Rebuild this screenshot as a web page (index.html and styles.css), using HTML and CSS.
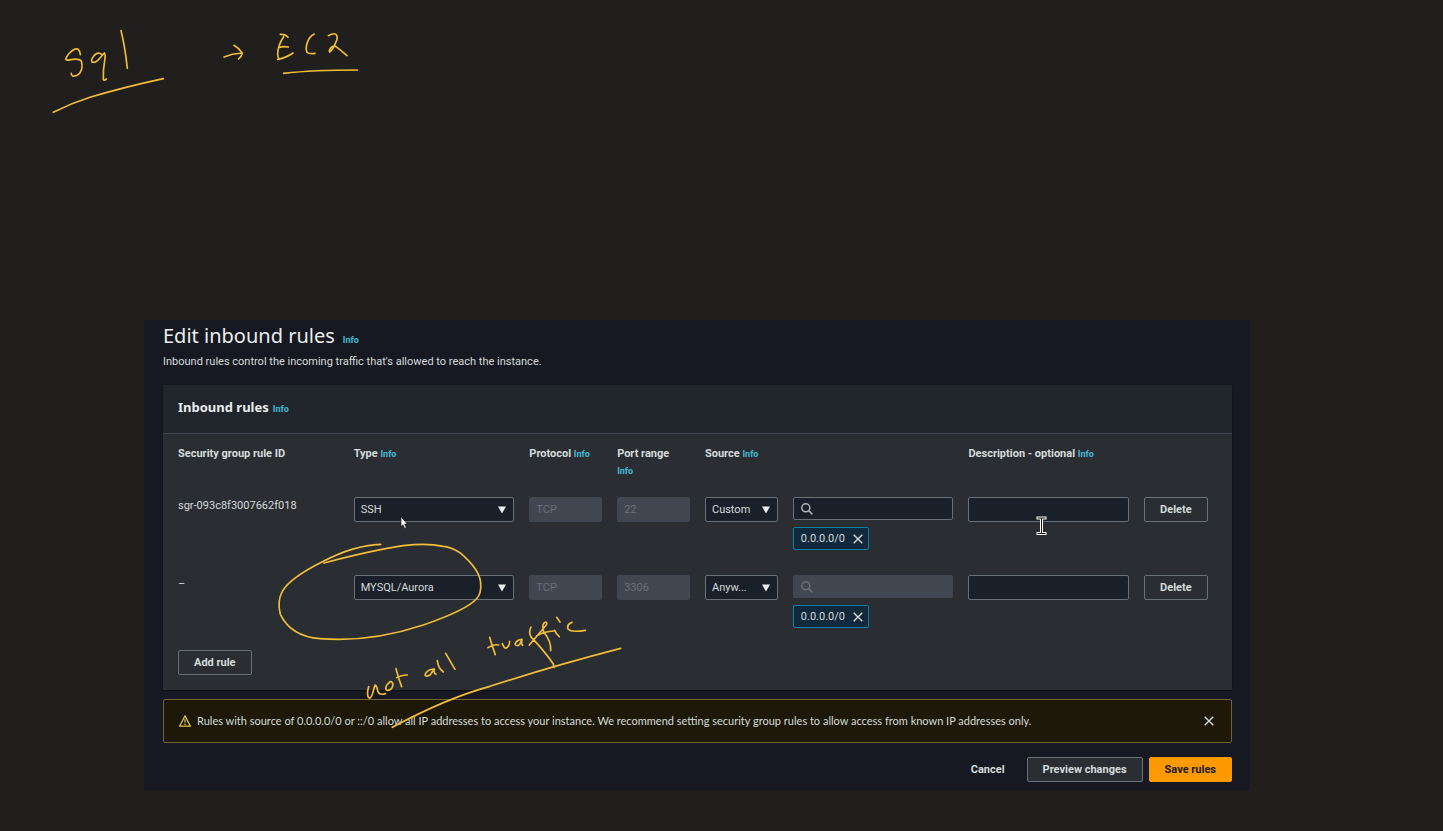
FILE: index.html
```html
<!DOCTYPE html>
<html lang="en">
<head>
<meta charset="utf-8">
<meta name="viewport" content="width=device-width, initial-scale=1">
<title>Edit inbound rules</title>
<link rel="stylesheet" href="styles.css">
</head>
<body>
<div class="board">
  <main class="console">
    <header class="page-head">
      <div class="title-row">
        <h1>Edit inbound rules</h1>
        <a class="info" href="#">Info</a>
      </div>
      <p>Inbound rules control the incoming traffic that's allowed to reach the instance.</p>
    </header>

    <section class="panel">
      <div class="panel-head">
        <h2>Inbound rules</h2>
        <a class="info" href="#">Info</a>
      </div>
      <div class="panel-body">
        <table class="rules">
          <colgroup>
            <col class="two"><col class="two"><col class="one"><col class="one"><col class="one"><col class="two"><col class="two"><col class="one">
          </colgroup>
          <thead>
            <tr>
              <th scope="col">Security group rule ID</th>
              <th scope="col">Type <a class="info" href="#">Info</a></th>
              <th scope="col">Protocol <a class="info" href="#">Info</a></th>
              <th scope="col">Port range<br><a class="info" href="#">Info</a></th>
              <th scope="col" colspan="2">Source <a class="info" href="#">Info</a></th>
              <th scope="col">Description - optional <a class="info" href="#">Info</a></th>
              <td></td>
            </tr>
          </thead>
          <tbody>
            <tr>
              <td><span class="rule-id">sgr-093c8f3007662f018</span></td>
              <td>
                <div class="select"><select class="field" aria-label="Type"><option>SSH</option></select><svg class="caret" viewBox="0 0 8 8"><path d="M0 0.5h8L4 7.5z"/></svg></div>
              </td>
              <td><input class="field" aria-label="Protocol" value="TCP" disabled></td>
              <td><input class="field" aria-label="Port range" value="22" disabled></td>
              <td>
                <div class="select"><select class="field" aria-label="Source type"><option>Custom</option></select><svg class="caret" viewBox="0 0 8 8"><path d="M0 0.5h8L4 7.5z"/></svg></div>
              </td>
              <td>
                <div class="search"><input class="field" type="search" aria-label="Source"><svg class="lens" viewBox="0 0 12 12"><circle cx="4.8" cy="4.8" r="4"/><path d="M7.8 7.8L11.4 11.4"/></svg></div>
                <span class="token">0.0.0.0/0<button class="close" type="button" aria-label="Remove 0.0.0.0/0"><svg viewBox="0 0 10 10"><path d="M.7.7l8.6 8.6M9.3.7L.7 9.3"/></svg></button></span>
              </td>
              <td><input class="field" aria-label="Description"></td>
              <td><button class="btn btn-row" type="button">Delete</button></td>
            </tr>
            <tr>
              <td><span class="rule-id">–</span></td>
              <td>
                <div class="select"><select class="field" aria-label="Type"><option>MYSQL/Aurora</option></select><svg class="caret" viewBox="0 0 8 8"><path d="M0 0.5h8L4 7.5z"/></svg></div>
              </td>
              <td><input class="field" aria-label="Protocol" value="TCP" disabled></td>
              <td><input class="field" aria-label="Port range" value="3306" disabled></td>
              <td>
                <div class="select"><select class="field" aria-label="Source type"><option>Anyw...</option></select><svg class="caret" viewBox="0 0 8 8"><path d="M0 0.5h8L4 7.5z"/></svg></div>
              </td>
              <td>
                <div class="search off"><input class="field" type="search" aria-label="Source" disabled><svg class="lens" viewBox="0 0 12 12"><circle cx="4.8" cy="4.8" r="4"/><path d="M7.8 7.8L11.4 11.4"/></svg></div>
                <span class="token">0.0.0.0/0<button class="close" type="button" aria-label="Remove 0.0.0.0/0"><svg viewBox="0 0 10 10"><path d="M.7.7l8.6 8.6M9.3.7L.7 9.3"/></svg></button></span>
              </td>
              <td><input class="field" aria-label="Description"></td>
              <td><button class="btn btn-row" type="button">Delete</button></td>
            </tr>
          </tbody>
        </table>
        <button class="btn" type="button">Add rule</button>
      </div>
    </section>

    <div class="alert" role="alert">
      <svg class="warn" viewBox="0 0 12 12"><path d="M6 .9L11.4 11.2H.6z"/><path d="M6 4.2v3.4M6 8.6v1.3"/></svg>
      <p>Rules with source of 0.0.0.0/0 or ::/0 allow all IP addresses to access your instance. We recommend setting security group rules to allow access from known IP addresses only.</p>
      <button class="close" type="button" aria-label="Dismiss"><svg viewBox="0 0 10 10"><path d="M.7.7l8.6 8.6M9.3.7L.7 9.3"/></svg></button>
    </div>

    <footer class="actions">
      <button class="btn btn-link" type="button">Cancel</button>
      <button class="btn btn-fill" type="button">Preview changes</button>
      <button class="btn btn-primary" type="button">Save rules</button>
    </footer>
  </main>

  <svg class="ink" width="1443" height="831" viewBox="0 0 1443 831" role="img" aria-label="Pen notes: Sql to EC2, not all traffic">
    <g transform="translate(40 20) scale(.3333)">
      <path d="M121 104Q119 84 105 87Q86 96 77 117Q78 123 98 118Q118 116 124 123Q130 145 119 160Q108 171 98 168Q93 166 94 160"/>
      <path d="M186 104Q174 94 163 106Q152 119 156 126Q166 131 180 114L193 99Q197 103 194 122Q189 150 190 178Q192 183 199 177"/>
      <path d="M243 32Q255 79 262 145M40 277Q93 250 150 232Q250 202 370 176"/>
      <path d="M552 111Q576 101 606 99M582 76Q596 84 607 99Q605 109 596 117"/>
      <path d="M721 43Q737 42 744 52M731 50Q714 75 713 102Q713 112 718 118M717 82Q730 78 745 81M713 118Q740 113 759 99"/>
      <path d="M823 42Q808 49 802 68Q796 84 801 97Q810 103 825 100"/>
      <path d="M865 47Q881 38 888 43Q896 53 887 68Q880 87 869 96L868 92Q874 76 887 79Q905 92 921 107M731 160Q820 150 952 150"/>
    </g>
    <g transform="translate(260 530) scale(.3333)">
      <path d="M362 43Q280 46 190 94Q90 144 67 184Q51 213 61 253Q93 319 180 326Q330 338 490 285Q620 240 649 207Q665 190 662 160Q661 120 600 68Q570 50 550 49Q500 38 430 47Q340 60 192 99"/>
    </g>
    <g transform="translate(350 600) scale(.3333)">
      <path d="M56 260Q50 280 55 292Q61 299 67 283L75 255Q81 258 83 273Q88 287 106 281"/>
      <path d="M118 248Q105 257 108 269Q115 275 125 265Q133 252 124 245Q118 244 117 249"/>
      <path d="M138 206Q145 235 155 260M140 233Q155 224 172 225"/>
      <path d="M250 207Q229 210 225 225Q227 232 240 225L253 207Q250 220 258 223M262 182Q264 204 280 216M287 160L315 208"/>
      <path d="M419 112Q425 133 436 164M414 143Q430 132 446 135M457 131Q463 146 469 144Q479 138 479 124M516 118Q500 119 495 132Q500 142 509 133L516 119Q513 132 518 136"/>
      <path d="M543 81Q532 105 551 119Q590 162 610 192L612 202M538 135L582 83Q596 69 587 66Q574 70 581 95Q605 125 602 152M560 107Q585 94 611 93M614 91Q618 102 628 110M620 52L630 66M666 67Q650 72 654 87Q663 98 706 91"/>
      <path d="M127 382Q290 294 420 259Q600 200 812 145"/>
    </g>
    <path class="pointer" d="M401 517v9.600l2-1.800 1.700 3.600 1.600-.8-1.700-3.500h2.500z"/>
    <path class="beam" d="M1038 518h3.500v15.500h-3.500M1045 518h-3.500v15.500h3.500"/>
    <path class="beam beam-core" d="M1038 518h3.500v15.500h-3.500M1045 518h-3.500v15.500h3.500"/>
  </svg>
</div>
</body>
</html>
```
FILE: styles.css
```css
* {
  box-sizing: border-box;
}

body {
  margin: 0;
  background: #201f1e;
  color: #d5dbdb;
  font: 11px/17px Roboto, "Noto Sans", sans-serif;
}

h1, h2, p {
  margin: 0;
}

button, input, select {
  font: inherit;
  color: inherit;
}

svg {
  fill: none;
  stroke: currentColor;
}

.board {
  position: relative;
  min-height: 100vh;
  padding: 320px 193px 41px 144px;
}

.console {
  padding: 0 18px 8px 19px;
  background: #161921;
}

.page-head {
  padding-bottom: 15px;
}

.title-row {
  display: flex;
  align-items: baseline;
  gap: 8px;
  padding-top: 2px;
}

h1 {
  font-family: "Noto Sans", sans-serif;
  font-size: 20px;
  font-weight: 400;
  line-height: 28px;
  color: #eaeded;
}

.page-head p {
  padding-top: 3px;
}

.info {
  color: #44b9d6;
  font-size: 9px;
  font-weight: 700;
  text-decoration: none;
}

.panel {
  background: #2a2e33;
  box-shadow: 0 1px 1px #0d1015;
}

.panel-head {
  display: flex;
  align-items: baseline;
  gap: 4px;
  padding: 12px 15px 15px;
  background: #21252c;
  border-bottom: 1px solid #414750;
}

h2 {
  font-family: "Noto Sans", sans-serif;
  font-size: 13px;
  line-height: 20px;
  color: #eaeded;
}

.panel-body {
  padding: 11px 0 15px 15px;
}

.rules {
  width: 100%;
  table-layout: fixed;
  border-collapse: collapse;
}

.rules .two {
  width: 16.666%;
}

.rules .one {
  width: 8.333%;
}

.rules th,
.rules td {
  padding: 0 15px 17px 0;
  text-align: left;
  vertical-align: top;
}

.rules th {
  padding-right: 8px;
}

.rules tbody td {
  padding-bottom: 25px;
}

.rules tbody tr:last-child td {
  padding-bottom: 22px;
}

.rule-id {
  display: block;
}

.field {
  display: block;
  width: 100%;
  height: 25px;
  margin: 0;
  padding: 0 6px;
  appearance: none;
  background: #1a2029;
  border: 1px solid #687078;
  border-radius: 2px;
  outline: 0;
}

.field:disabled {
  background: #414750;
  border-color: #414750;
  color: #687078;
  opacity: 1;
}

.select,
.search {
  position: relative;
}

.caret {
  position: absolute;
  top: 9px;
  right: 8px;
  width: 8px;
  height: 8px;
  fill: #eaeded;
  stroke: none;
  pointer-events: none;
}

.search .field {
  height: 23px;
  padding-left: 24px;
}

.lens {
  position: absolute;
  top: 6px;
  left: 8px;
  width: 12px;
  height: 12px;
  stroke: #aab7b8;
  stroke-width: 1.5;
}

.off .lens {
  stroke: #687078;
}

.token {
  display: flex;
  align-items: center;
  gap: 8px;
  width: max-content;
  height: 23px;
  margin-top: 7px;
  padding: 0 5px 0 7px;
  background: #12293b;
  border: 1px solid #0a7ea4;
  border-radius: 2px;
}

.close {
  display: flex;
  padding: 0;
  background: none;
  border: 0;
}

.close svg {
  width: 10px;
  height: 10px;
  stroke-width: 1.4;
}

.btn {
  height: 25px;
  padding: 0 15px;
  background: none;
  border: 1px solid #687078;
  border-radius: 2px;
  font-weight: 700;
  line-height: 17px;
  white-space: nowrap;
}

.alert {
  display: flex;
  align-items: center;
  gap: 6px;
  margin-top: 9px;
  padding: 12px 17px 13px 15px;
  background: #1d1808;
  border: 1px solid #6f6431;
  border-radius: 2px;
}

.alert p {
  flex: 1;
  font-family: Lato, "Noto Sans", sans-serif;
}

.warn {
  width: 12px;
  height: 12px;
  color: #e0c34c;
  stroke-width: 1.2;
}

.actions {
  display: flex;
  justify-content: flex-end;
  gap: 6px;
  padding-top: 14px;
}

.btn-link {
  border-color: transparent;
}

.btn-fill {
  background: #2a2e33;
}

.btn-primary {
  background: #ff9900;
  border-color: #ff9900;
  color: #16191f;
}

.ink {
  position: absolute;
  top: 0;
  left: 0;
  pointer-events: none;
  color: #f2bd35;
  stroke-width: 5;
  stroke-linecap: round;
  stroke-linejoin: round;
}

.pointer {
  fill: #ffffff;
  stroke: #111111;
  stroke-width: 0.6;
}

.beam {
  stroke: #ffffff;
  stroke-width: 3;
  stroke-linecap: square;
}

.beam-core {
  stroke: #111111;
  stroke-width: 1;
}
```
